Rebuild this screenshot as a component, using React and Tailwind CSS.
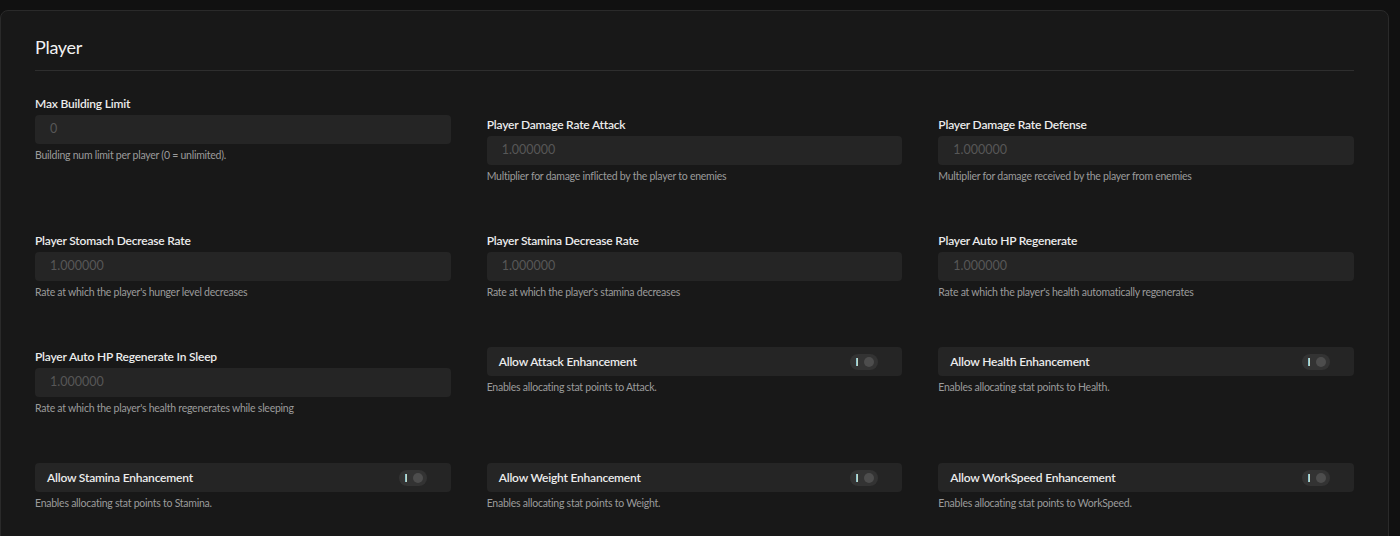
import React from "react";

const rows = [
  [
    { type: "input", label: "Max Building Limit", value: "0", help: "Building num limit per player (0 = unlimited)." },
    { type: "input", label: "Player Damage Rate Attack", value: "1.000000", help: "Multiplier for damage inflicted by the player to enemies", offset: true },
    { type: "input", label: "Player Damage Rate Defense", value: "1.000000", help: "Multiplier for damage received by the player from enemies", offset: true },
  ],
  [
    { type: "input", label: "Player Stomach Decrease Rate", value: "1.000000", help: "Rate at which the player's hunger level decreases" },
    { type: "input", label: "Player Stamina Decrease Rate", value: "1.000000", help: "Rate at which the player's stamina decreases" },
    { type: "input", label: "Player Auto HP Regenerate", value: "1.000000", help: "Rate at which the player's health automatically regenerates" },
  ],
  [
    { type: "input", label: "Player Auto HP Regenerate In Sleep", value: "1.000000", help: "Rate at which the player's health regenerates while sleeping" },
    { type: "toggle", label: "Allow Attack Enhancement", help: "Enables allocating stat points to Attack." },
    { type: "toggle", label: "Allow Health Enhancement", help: "Enables allocating stat points to Health." },
  ],
  [
    { type: "toggle", label: "Allow Stamina Enhancement", help: "Enables allocating stat points to Stamina." },
    { type: "toggle", label: "Allow Weight Enhancement", help: "Enables allocating stat points to Weight." },
    { type: "toggle", label: "Allow WorkSpeed Enhancement", help: "Enables allocating stat points to WorkSpeed." },
  ],
];

function Switch() {
  return (
    <div className="flex items-center justify-between w-[28px] h-[16px] rounded-full bg-[#333333] px-[4px]">
      <span className="w-[2px] h-[8px] ml-[2px] bg-gradient-to-r from-[#6fb7d9] to-[#d9e3b8]"></span>
      <span className="w-[10px] h-[10px] rounded-full bg-[#4d4d4d]"></span>
    </div>
  );
}

function Setting({ item }) {
  const help = (
    <p className="mt-[3px] text-[10.5px] leading-4 tracking-[-0.25px] text-[#9b9b9b]">{item.help}</p>
  );
  if (item.type === "toggle") {
    return (
      <div>
        <div className="flex items-center justify-between h-[29px] rounded bg-[#252525] pl-3 pr-6">
          <span className="text-[12px] tracking-[-0.2px] font-semibold text-[#ececec]">{item.label}</span>
          <Switch />
        </div>
        {help}
      </div>
    );
  }
  return (
    <div className={item.offset ? "mt-[21px]" : ""}>
      <p className="text-[12px] leading-5 tracking-[-0.2px] font-semibold text-[#ececec]">{item.label}</p>
      <div className="mt-[1px] flex items-center h-[29px] rounded bg-[#252525] px-[15px] text-[12.5px] text-[#575757]">
        {item.value}
      </div>
      {help}
    </div>
  );
}

export default function App() {
  return (
    <div
      className="min-h-[536px] bg-[#111111] pt-[10px] overflow-hidden"
      style={{ fontFamily: "Lato, 'Noto Sans', sans-serif" }}
    >
      <div className="w-[1389px] min-h-[560px] rounded-lg border border-[#2a2a2a] bg-[#181818] px-[34px]">
        <h2 className="pt-[22px] pb-[9px] text-lg leading-7 tracking-[-0.3px] text-[#f2f2f2] border-b border-[#2e2e2e]">
          Player
        </h2>
        <div className="mt-[23px] grid grid-cols-3 gap-x-[36px] gap-y-[47px]">
          {rows.flat().map((item) => (
            <Setting key={item.label} item={item} />
          ))}
        </div>
      </div>
    </div>
  );
}
